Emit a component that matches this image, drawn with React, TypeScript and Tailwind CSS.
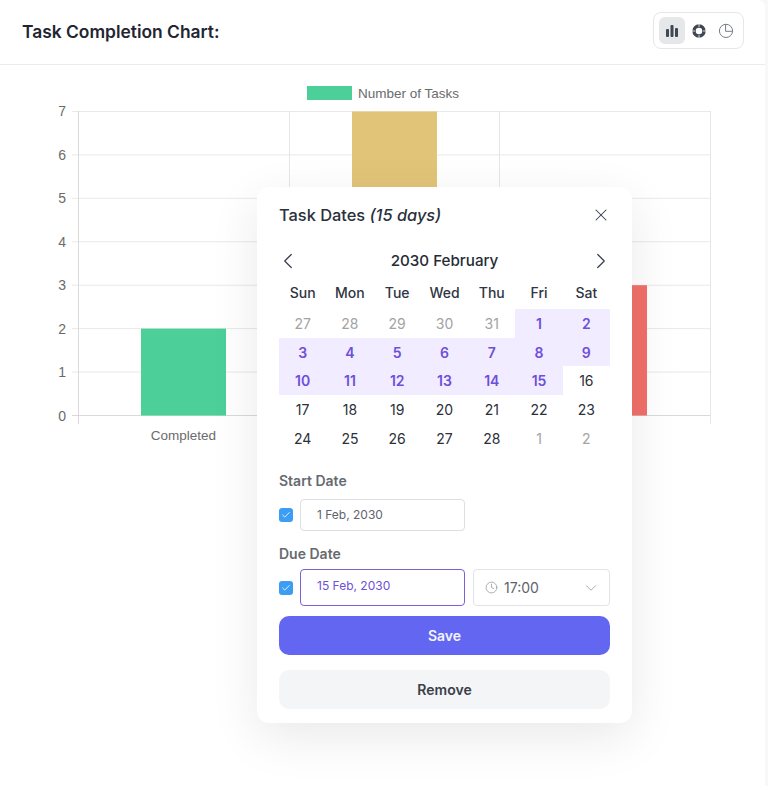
import { ChevronDown, ChevronLeft, ChevronRight, Check, Clock, X } from "lucide-react";

const WEEKDAYS = ["Sun", "Mon", "Tue", "Wed", "Thu", "Fri", "Sat"];

type Day = { label: number; muted?: boolean; picked?: boolean };

const DAYS: Day[] = [
  ...[27, 28, 29, 30, 31].map((label) => ({ label, muted: true })),
  ...Array.from({ length: 28 }, (_, i) => ({ label: i + 1, picked: i < 15 })),
  ...[1, 2].map((label) => ({ label, muted: true })),
];

const Y_TICKS = [0, 1, 2, 3, 4, 5, 6, 7];
const yOf = (v: number) => 415.5 - v * 43.43;

// viewBox starts at 65 so the numbers below read as page coordinates
function BarChart() {
  return (
    <svg width="765" height="400" viewBox="0 65 765 400" className="block" style={{ fontFamily: "'Liberation Sans', Arial, sans-serif" }}>
      <rect x="307.5" y="86.5" width="44" height="13" fill="#4ccf98" stroke="#4ccf98" />
      <text x="358" y="97.5" fontSize="13.5" fill="#6b6b6b">Number of Tasks</text>
      {Y_TICKS.map((v) => (
        <g key={v}>
          <line x1="72" x2="710" y1={yOf(v)} y2={yOf(v)} stroke={v === 0 ? "#d9d9d9" : "#e9e9e9"} />
          <text x="66" y={yOf(v) + 5} fontSize="14" fill="#6b6b6b" textAnchor="end">{v}</text>
        </g>
      ))}
      {[78.5, 289.5, 499.5, 710.5].map((x, i) => (
        <line key={x} x1={x} x2={x} y1="111" y2="424" stroke={i === 0 ? "#d9d9d9" : "#e6e6e6"} />
      ))}
      <rect x="141" y={yOf(2)} width="85" height={2 * 43.43} fill="#4ccf98" />
      <rect x="352" y={yOf(7)} width="85" height={7 * 43.43} fill="#e2c478" />
      <rect x="562" y={yOf(3)} width="85" height={3 * 43.43} fill="#f2706a" />
      <text x="183.5" y="440" fontSize="13.5" fill="#6b6b6b" textAnchor="middle">Completed</text>
    </svg>
  );
}

function ChartToggle() {
  return (
    <div className="mb-[3px] flex h-[37px] w-[91px] items-center gap-px rounded-lg border border-gray-200 pl-[5px]">
      <span className="flex h-[27px] w-[26px] items-center justify-center rounded-md bg-[#e6e7e9]">
        <svg width="14" height="14" viewBox="0 0 14 14" fill="#3f4654">
          <rect x="1" y="5" width="3" height="8" rx="1" />
          <rect x="5.5" y="1" width="3" height="12" rx="1" />
          <rect x="10" y="4" width="3" height="9" rx="1" />
        </svg>
      </span>
      <span className="flex h-[27px] w-[26px] items-center justify-center">
        <svg width="16" height="16" viewBox="0 0 16 16" fill="none" stroke="#3f4654">
          <circle cx="8" cy="8" r="5" strokeWidth="3.4" />
          <path d="M8 1v3M8 12v3M1 8h3M12 8h3" stroke="#fff" strokeWidth="0.8" />
        </svg>
      </span>
      <span className="flex h-[27px] w-[26px] items-center justify-center">
        <svg width="16" height="16" viewBox="0 0 16 16" fill="none" stroke="#777c85" strokeWidth="1">
          <path d="M7.6 1.3a6.6 6.6 0 1 0 7 7H7.6z" />
          <path d="M7.6 1.3a6.6 6.6 0 0 1 7 7" />
        </svg>
      </span>
    </div>
  );
}

function CheckBox() {
  return (
    <span className="flex h-[14px] w-[14px] shrink-0 items-center justify-center rounded-[3px] bg-[#3d9df5]">
      <Check size={10} color="#fff" strokeWidth={2} />
    </span>
  );
}

function TaskDates() {
  return (
    <div className="absolute left-[257px] top-[187px] flex h-[536px] w-[375px] flex-col rounded-xl bg-white px-[22px] shadow-[0_14px_50px_rgba(0,0,0,0.09)]">
      <div className="flex h-[56px] items-center justify-between">
        <h2 className="text-[16.4px] font-medium text-[#2a303c]">
          Task Dates <em>(15 days)</em>
        </h2>
        <X size={20} color="#374151" strokeWidth={1.25} className="-mr-[1px]" />
      </div>

      <div className="mt-[4px] flex h-[28px] items-center justify-between">
        <ChevronLeft size={26} color="#374151" strokeWidth={1.15} className="-ml-[4px]" />
        <span className="text-[15.2px] font-medium text-[#262b36]">2030 February</span>
        <ChevronRight size={26} color="#374151" strokeWidth={1.15} className="-mr-[4px]" />
      </div>

      <div className="mt-[3px] grid h-[31px] grid-cols-7 items-center pb-[2px] text-center text-[14px] font-medium text-[#2f3542]">
        {WEEKDAYS.map((d) => (
          <span key={d}>{d}</span>
        ))}
      </div>

      <div className="grid grid-cols-7 auto-rows-[28.7px] text-center text-[14px]">
        {DAYS.map((d, i) => (
          <span
            key={i}
            className={
              d.picked
                ? "flex items-center justify-center bg-[#f1ecff] font-semibold text-[#6d4fd8]"
                : d.muted
                  ? "flex items-center justify-center text-[#a3a3a3]"
                  : "flex items-center justify-center text-[#2b2f38]"
            }
          >
            {d.label}
          </span>
        ))}
      </div>

      <label className="mt-[17px] text-[14px] font-semibold leading-[24px] text-[#666a70]">Start Date</label>
      <div className="mt-[6px] flex items-center gap-[7px]">
        <CheckBox />
        <div className="flex h-[32px] w-[165px] items-center rounded border border-[#dcdee2] pl-[16px] text-[12px] text-[#5f636b]">
          1 Feb, 2030
        </div>
      </div>

      <label className="mt-[11px] text-[14px] font-semibold leading-[24px] text-[#666a70]">Due Date</label>
      <div className="mt-[3px] flex items-center gap-[7px]">
        <CheckBox />
        <div className="flex h-[37px] w-[165px] items-center rounded border border-[#7d5fd6] pb-[3px] pl-[16px] text-[12px] text-[#6d4fd8]">
          15 Feb, 2030
        </div>
        <div className="ml-px flex h-[37px] flex-1 items-center rounded border border-[#e2e3e6] pl-[11px] pr-[11px] text-[14px] text-[#5f636b]">
          <Clock size={13} color="#9a9da3" strokeWidth={1.5} />
          <span className="ml-[6px] flex-1">17:00</span>
          <ChevronDown size={18} color="#a3a6ab" strokeWidth={1.25} className="-mr-[2px]" />
        </div>
      </div>

      <button className="mt-[10px] h-[39px] rounded-[10px] bg-[#6366f1] text-[14px] font-semibold text-[#f3f3ff]">Save</button>
      <button className="mt-[15px] h-[39px] rounded-[10px] bg-[#f3f5f7] text-[14px] font-semibold text-[#3a3f4a]">Remove</button>
    </div>
  );
}

export default function App() {
  return (
    <div className="relative h-[786px] w-[768px] overflow-hidden bg-[#f8f8f9] font-['Inter',sans-serif]">
      <div className="h-full w-[765px] rounded-tr-lg bg-white">
        <header className="flex h-[65px] items-center justify-between border-b border-[#ececee] pl-[22px] pr-[21px]">
          <h1 className="text-[17.4px] font-semibold text-[#1f2532]">Task Completion Chart:</h1>
          <ChartToggle />
        </header>
        <BarChart />
      </div>
      <TaskDates />
    </div>
  );
}
